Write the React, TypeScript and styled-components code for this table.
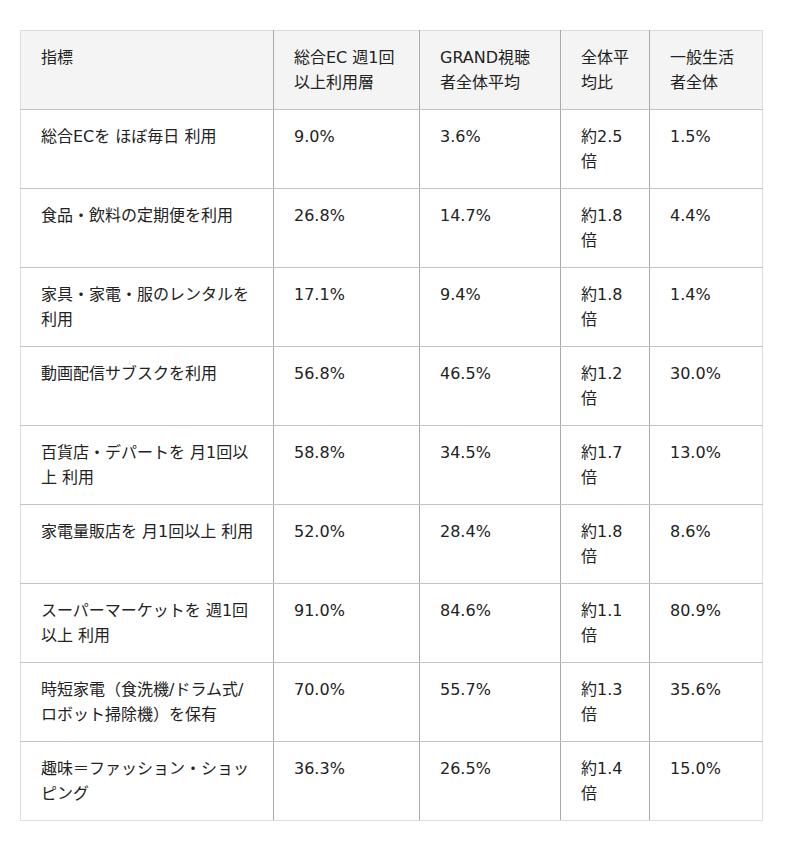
import React from "react";
import { createGlobalStyle, styled } from "styled-components";

const GlobalStyle = createGlobalStyle`
  body {
    margin: 0;
    background: #ffffff;
    font-family: "DejaVu Sans", "Noto Sans CJK JP", sans-serif;
    color: #222222;
  }
`;

interface Row {
  label: string;
  ec: string;
  grand: string;
  ratio: string;
  all: string;
}

const rows: Row[] = [
  { label: "総合ECを ほぼ毎日 利用", ec: "9.0%", grand: "3.6%", ratio: "約2.5倍", all: "1.5%" },
  { label: "食品・飲料の定期便を利用", ec: "26.8%", grand: "14.7%", ratio: "約1.8倍", all: "4.4%" },
  { label: "家具・家電・服のレンタルを利用", ec: "17.1%", grand: "9.4%", ratio: "約1.8倍", all: "1.4%" },
  { label: "動画配信サブスクを利用", ec: "56.8%", grand: "46.5%", ratio: "約1.2倍", all: "30.0%" },
  { label: "百貨店・デパートを 月1回以上 利用", ec: "58.8%", grand: "34.5%", ratio: "約1.7倍", all: "13.0%" },
  { label: "家電量販店を 月1回以上 利用", ec: "52.0%", grand: "28.4%", ratio: "約1.8倍", all: "8.6%" },
  { label: "スーパーマーケットを 週1回以上 利用", ec: "91.0%", grand: "84.6%", ratio: "約1.1倍", all: "80.9%" },
  { label: "時短家電（食洗機/ドラム式/ロボット掃除機）を保有", ec: "70.0%", grand: "55.7%", ratio: "約1.3倍", all: "35.6%" },
  { label: "趣味＝ファッション・ショッピング", ec: "36.3%", grand: "26.5%", ratio: "約1.4倍", all: "15.0%" },
];

const columns = [
  { title: "指標", width: 253 },
  { title: "総合EC 週1回以上利用層", width: 146 },
  { title: "GRAND視聴者全体平均", width: 141 },
  { title: "全体平均比", width: 89 },
  { title: "一般生活者全体", width: 113 },
];

export default function App() {
  return (
    <Page>
      <GlobalStyle />
      <Table>
        <colgroup>
          {columns.map((c) => (
            <col key={c.title} style={{ width: c.width }} />
          ))}
        </colgroup>
        <thead>
          <tr>
            {columns.map((c) => (
              <HeadCell key={c.title}>{c.title}</HeadCell>
            ))}
          </tr>
        </thead>
        <tbody>
          {rows.map((r) => (
            <tr key={r.label}>
              <Cell>{r.label}</Cell>
              <Cell>{r.ec}</Cell>
              <Cell>{r.grand}</Cell>
              <Cell>{r.ratio}</Cell>
              <Cell>{r.all}</Cell>
            </tr>
          ))}
        </tbody>
      </Table>
    </Page>
  );
}

const Page = styled.div`
  padding: 30px 20px;
`;

const Table = styled.table`
  width: 743px;
  table-layout: fixed;
  border-collapse: collapse;
  border: 1px solid #dddddd;
  font-size: 16px;
  line-height: 25px;
`;

const HeadCell = styled.th`
  background: #f4f4f4;
  font-weight: 400;
  text-align: left;
  vertical-align: top;
  padding: 14px 18px 14px 20px;
  border-bottom: 1px solid #c4c4c4;
  border-right: 1px solid #aaaaaa;

  &:last-child {
    border-right: 1px solid #dddddd;
  }
`;

const Cell = styled.td`
  vertical-align: top;
  padding: 14px 18px 14px 20px;
  border-bottom: 1px solid #c4c4c4;
  border-right: 1px solid #aaaaaa;
  word-break: break-all;

  &:last-child {
    border-right: 1px solid #dddddd;
  }

  tr:last-child > & {
    border-bottom: 1px solid #dddddd;
  }
`;
